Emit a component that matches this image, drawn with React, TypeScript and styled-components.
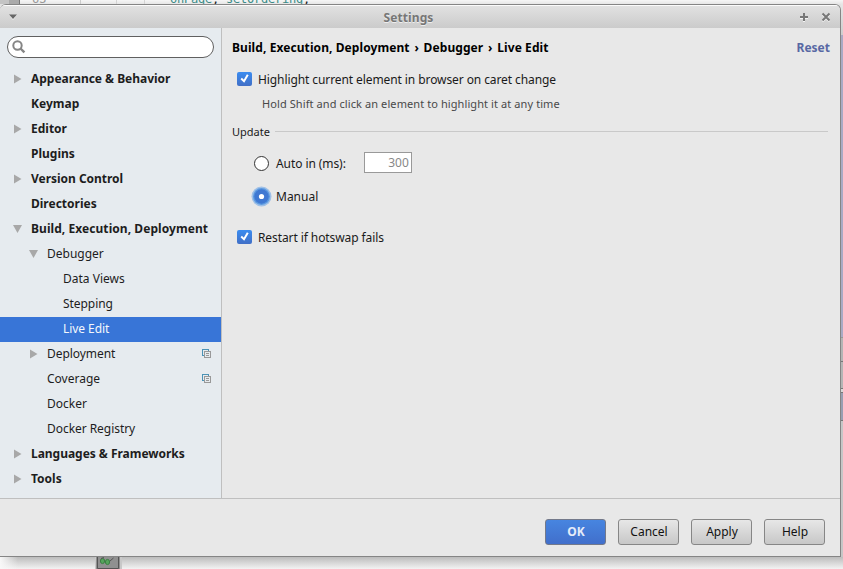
import React from "react";
import styled, { createGlobalStyle } from "styled-components";

const GlobalStyle = createGlobalStyle`
  * { box-sizing: border-box; }
  html, body { margin: 0; padding: 0; }
  body { overflow: hidden; font: 12px/16px "Noto Sans", sans-serif; color: #1a1a1a; }
`;

const Desktop = styled.div`
  width: 843px;
  height: 569px;
  display: flex;
  flex-direction: column;
  overflow: hidden;
  background: #f8f8f8;
`;

const EditorStrip = styled.div`
  display: flex;
  align-items: flex-end;
  flex: none;
  height: 4px;
  overflow: hidden;
  background: linear-gradient(#f6f6f6, #e6e6e6);
  font: 12px/14px "DejaVu Sans Mono", monospace;
`;
const ToolStripe = styled.div`
  width: 20px;
  height: 4px;
  background: linear-gradient(90deg, #c4c4c4 9px, #aaa 9px 19px, #777 19px);
`;
const LineNumber = styled.div`
  width: 61px;
  margin-bottom: -2px;
  padding-left: 12px;
  color: #999;
  border-right: 1px solid #ccc;
`;
const Guide = styled.div<{ $width: number }>`
  width: ${(p) => p.$width}px;
  height: 4px;
  border-right: 1px solid #d4d4d4;
`;
const Code = styled.div`
  margin-bottom: -2px;
  padding-left: 25px;
  color: #3b8b87;
  letter-spacing: -0.22px;
  white-space: pre;
  span { color: #222; }
`;

const Middle = styled.div`
  display: flex;
  flex: none;
  height: 553px;
  background: #e2e2e2;
`;

const Window = styled.div`
  display: flex;
  flex-direction: column;
  width: 841px;
  height: 553px;
  border: solid #858585;
  border-width: 1px 1px 1px 0;
  border-radius: 6px 6px 0 0;
  overflow: hidden;
  background: #e8e8e8;
`;

const RightEdge = styled.div`
  width: 2px;
  background: linear-gradient(
    #e6e6e6 0, #cdcdcd 31px, #aaaac4 31px 333px, #999 333px 334px, #b4b4b4 334px 357px,
    #777 357px 358px, #b5b5b5 358px 384px, #777 384px 385px, #d8d8d8 385px 388px,
    #777 388px 389px, #999fb2 389px 416px, #777 416px 417px, #c6c6c6 417px 100%
  );
`;

const TitleBar = styled.div`
  display: flex;
  align-items: center;
  flex: none;
  height: 23px;
  padding: 0 9px 0 8px;
  border-top: 1px solid #fbfbfb;
  background: linear-gradient(#e1e1e1, #cbcbcb);
`;
const Title = styled.div`
  flex: 1;
  padding: 1px 0 0 0;
  text-align: center;
  font-weight: 700;
  letter-spacing: 0.1px;
  color: #767676;
  text-shadow: 0 1px #eee;
`;
const WindowControls = styled.div`
  display: flex;
  gap: 12px;
`;

const Body = styled.div`
  display: flex;
  height: 471px;
  flex: none;
  border-bottom: 1px solid #bfbfbf;
`;

const Sidebar = styled.div`
  width: 222px;
  padding-top: 8px;
  border-right: 1px solid #bfbfbf;
  background: #e6ebef;
`;
const Search = styled.div`
  display: flex;
  align-items: center;
  width: 207px;
  height: 22px;
  margin: 0 0 9px 7px;
  padding-left: 4px;
  border: 1px solid #606060;
  border-radius: 11px;
  background: #fff;
`;

const Row = styled.div<{ $level: number; $selected?: boolean }>`
  display: flex;
  align-items: center;
  height: 25px;
  padding: 0 9px 1px ${(p) => 12 + p.$level * 16}px;
  color: ${(p) => (p.$selected ? "#f4f7fc" : "#1d1d1d")};
  background: ${(p) => (p.$selected ? "#3875d7" : "transparent")};
`;
const ArrowSlot = styled.div`
  display: flex;
  align-items: center;
  width: 19px;
`;
const RowLabel = styled.div<{ $bold?: boolean; $spacing?: number }>`
  flex: 1;
  white-space: nowrap;
  font-weight: ${(p) => (p.$bold ? 700 : 400)};
  letter-spacing: ${(p) => p.$spacing || 0}px;
  padding-bottom: 1px;
`;

const Content = styled.div`
  flex: 1;
  padding: 0 11px 0 10px;
`;
const Header = styled.div`
  display: flex;
  justify-content: space-between;
  height: 20px;
  margin-top: 10px;
  line-height: 20px;
  font-weight: 700;
  color: #000;
`;
const Breadcrumbs = styled.div`
  display: flex;
  letter-spacing: 0.08px;
`;
const Separator = styled.span`
  width: 14px;
  text-align: center;
`;
const Reset = styled.div`
  margin-right: -1px;
  color: #5868a4;
`;
const Option = styled.div<{ $top: number; $indent: number }>`
  display: flex;
  align-items: center;
  height: 22px;
  margin: ${(p) => p.$top}px 0 0 ${(p) => p.$indent}px;
  white-space: nowrap;
`;
const OptionLabel = styled.div<{ $gap: number; $spacing?: number }>`
  margin-left: ${(p) => p.$gap}px;
  padding-top: 2px;
  letter-spacing: ${(p) => p.$spacing || 0}px;
`;
const Hint = styled.div`
  height: 16px;
  margin: 6px 0 0 30px;
  font-size: 11px;
  letter-spacing: 0.09px;
  color: #484848;
`;
const Section = styled.div`
  display: flex;
  align-items: center;
  height: 16px;
  margin: 12px 0 0;
  font-size: 11px;
  &::after {
    content: "";
    flex: 1;
    height: 1px;
    margin: 0 1px 1px 5px;
    background: #c9c9c9;
  }
`;
const CheckBox = styled.div`
  display: flex;
  width: 15px;
  height: 14px;
  border-radius: 2px;
  background: linear-gradient(#3b8cf0, #416fc6);
`;
const NumberField = styled.div`
  width: 48px;
  height: 21px;
  margin: -2px 0 0 18px;
  padding-right: 2px;
  border: 1px solid #999;
  background: #fff;
  color: #888;
  line-height: 19px;
  text-align: right;
`;

const Footer = styled.div`
  display: flex;
  flex: 1;
  align-items: flex-start;
  justify-content: flex-end;
  gap: 12px;
  padding: 20px 15px 0 0;
`;
const Button = styled.div<{ $primary?: boolean }>`
  width: 61px;
  height: 26px;
  padding-left: 1px;
  border: 1px solid ${(p) => (p.$primary ? "#73798a" : "#868686")};
  border-radius: 3px;
  background: ${(p) => (p.$primary ? "linear-gradient(#4785e0, #416fcb)" : "linear-gradient(#e7e7e7, #c7c7c7)")};
  color: ${(p) => (p.$primary ? "#e4ecf9" : "#111")};
  font-weight: ${(p) => (p.$primary ? 700 : 400)};
  line-height: 24px;
  text-align: center;
`;

const BottomStrip = styled.div`
  display: flex;
  flex: 1;
  padding-left: 95px;
  background:
    linear-gradient(90deg, #f8f8f8 0, transparent 18px),
    linear-gradient(#bcbcbc, #f3f3f3);
`;
const ToolButton = styled.div`
  width: 27px;
  height: 12px;
  border: solid #c8c8c8;
  border-width: 0 2px 0 1px;
  background: #909090;
  svg { display: block; }
`;

const Arrow = ({ open }: { open?: boolean }) => (
  <svg width="11" height="10" viewBox="0 0 11 10">
    <path d={open ? "M1 1H10L5.5 9Z" : "M2 .5V9.5L9.5 5Z"} fill="#a8a8a8" />
  </svg>
);

const Copies = () => (
  <svg width="10" height="10" viewBox="0 0 10 10" fill="none" shapeRendering="crispEdges">
    <path d="M2 6.5H.5V.5H6.5V2" stroke="#4c93b6" />
    <path d="M2.5 2.5H8.5V8.5H2.5ZM4 4.5H7M4 6.5H7" stroke="#999" />
  </svg>
);

const Checked = () => (
  <CheckBox>
    <svg width="15" height="14" viewBox="0 0 15 14">
      <path d="M4.2 6.6L7 9.2L10.8 2.8" fill="none" stroke="#fff" strokeWidth="2" />
    </svg>
  </CheckBox>
);

const Radio = ({ on }: { on?: boolean }) => (
  <svg width="21" height="21" viewBox="0 0 21 21">
    {on ? (
      <>
        <circle cx="10.5" cy="10.5" r="10" fill="#9fc0e7" />
        <circle cx="10.5" cy="10.5" r="8.5" fill="#5c9ae0" />
        <circle cx="10.5" cy="10.5" r="7.2" fill="#3f78d2" />
        <circle cx="10.5" cy="10.5" r="2.6" fill="#fff" />
      </>
    ) : (
      <circle cx="10.5" cy="10.5" r="7" fill="#fff" stroke="#333" />
    )}
  </svg>
);

type Item = {
  label: string;
  level: number;
  arrow?: "open" | "closed";
  bold?: boolean;
  selected?: boolean;
  copies?: boolean;
  spacing?: number;
};
const items: Item[] = [
  { label: "Appearance & Behavior", level: 0, arrow: "closed", bold: true, spacing: -0.03 },
  { label: "Keymap", level: 0, bold: true },
  { label: "Editor", level: 0, arrow: "closed", bold: true },
  { label: "Plugins", level: 0, bold: true },
  { label: "Version Control", level: 0, arrow: "closed", bold: true, spacing: -0.03 },
  { label: "Directories", level: 0, bold: true },
  { label: "Build, Execution, Deployment", level: 0, arrow: "open", bold: true, spacing: 0.06 },
  { label: "Debugger", level: 1, arrow: "open" },
  { label: "Data Views", level: 2 },
  { label: "Stepping", level: 2, spacing: -0.05 },
  { label: "Live Edit", level: 2, selected: true, spacing: -0.05 },
  { label: "Deployment", level: 1, arrow: "closed", copies: true, spacing: -0.05 },
  { label: "Coverage", level: 1, copies: true },
  { label: "Docker", level: 1 },
  { label: "Docker Registry", level: 1, spacing: -0.05 },
  { label: "Languages & Frameworks", level: 0, arrow: "closed", bold: true, spacing: -0.03 },
  { label: "Tools", level: 0, arrow: "closed", bold: true },
];

export default function App() {
  return (
    <>
      <GlobalStyle />
      <Desktop>
        <EditorStrip>
          <ToolStripe />
          <LineNumber>63</LineNumber>
          <Guide $width={36} />
          <Guide $width={28} />
          <Code>onPage<span>,</span> setOrdering<span>,</span></Code>
        </EditorStrip>
        <Middle>
          <Window>
            <TitleBar>
              <svg width="10" height="8" viewBox="0 0 10 8">
                <path d="M1 2H9L5 7Z" fill="#f2f2f2" />
                <path d="M1 1.5H9L5 6Z" fill="#666" />
              </svg>
              <Title>Settings</Title>
              <WindowControls>
                <svg width="10" height="10" viewBox="0 0 10 10" fill="none" strokeWidth="2">
                  <path d="M5 2V10M1 6H9" stroke="#f4f4f4" />
                  <path d="M5 1V9M1 5H9" stroke="#777" />
                </svg>
                <svg width="10" height="10" viewBox="0 0 10 10" fill="none" strokeWidth="2">
                  <path d="M1.5 2.5L8.5 9.5M8.5 2.5L1.5 9.5" stroke="#f4f4f4" />
                  <path d="M1.5 1.5L8.5 8.5M8.5 1.5L1.5 8.5" stroke="#777" />
                </svg>
              </WindowControls>
            </TitleBar>
            <Body>
              <Sidebar>
                <Search>
                  <svg width="14" height="14" viewBox="0 0 14 14" fill="none" stroke="#858585">
                    <circle cx="5.5" cy="5.5" r="4.2" strokeWidth="2" />
                    <path d="M8.5 8.5L12.4 12.4" strokeWidth="2.4" />
                  </svg>
                </Search>
                {items.map((item) => (
                  <Row key={item.label} $level={item.level} $selected={item.selected}>
                    <ArrowSlot>{item.arrow && <Arrow open={item.arrow === "open"} />}</ArrowSlot>
                    <RowLabel $bold={item.bold} $spacing={item.spacing}>{item.label}</RowLabel>
                    {item.copies && <Copies />}
                  </Row>
                ))}
              </Sidebar>
              <Content>
                <Header>
                  <Breadcrumbs>
                    <span>Build, Execution, Deployment</span>
                    <Separator>›</Separator>
                    <span>Debugger</span>
                    <Separator>›</Separator>
                    <span>Live Edit</span>
                  </Breadcrumbs>
                  <Reset>Reset</Reset>
                </Header>
                <Option $top={10} $indent={5}>
                  <Checked />
                  <OptionLabel $gap={6} $spacing={-0.09}>Highlight current element in browser on caret change</OptionLabel>
                </Option>
                <Hint>Hold Shift and click an element to highlight it at any time</Hint>
                <Section>Update</Section>
                <Option $top={12} $indent={19}>
                  <Radio />
                  <OptionLabel $gap={4} $spacing={-0.08}>Auto in (ms):</OptionLabel>
                  <NumberField>300</NumberField>
                </Option>
                <Option $top={11} $indent={19}>
                  <Radio on />
                  <OptionLabel $gap={4}>Manual</OptionLabel>
                </Option>
                <Option $top={19} $indent={5}>
                  <Checked />
                  <OptionLabel $gap={6} $spacing={-0.09}>Restart if hotswap fails</OptionLabel>
                </Option>
              </Content>
            </Body>
            <Footer>
              <Button $primary>OK</Button>
              <Button>Cancel</Button>
              <Button>Apply</Button>
              <Button>Help</Button>
            </Footer>
          </Window>
          <RightEdge />
        </Middle>
        <BottomStrip>
          <ToolButton>
            <svg width="24" height="12" viewBox="0 0 24 12">
              <path d="M1.5 0V11.5H22.5V0" fill="none" stroke="#555" />
              <ellipse cx="6.5" cy="4" rx="2.1" ry="2.6" fill="#56a45c" stroke="#3c8042" />
              <ellipse cx="11.5" cy="5" rx="2.1" ry="2.6" fill="#56a45c" stroke="#3c8042" />
              <path d="M5 1.5L8 .5M14 4L17.5 1" stroke="#555" />
            </svg>
          </ToolButton>
        </BottomStrip>
      </Desktop>
    </>
  );
}
